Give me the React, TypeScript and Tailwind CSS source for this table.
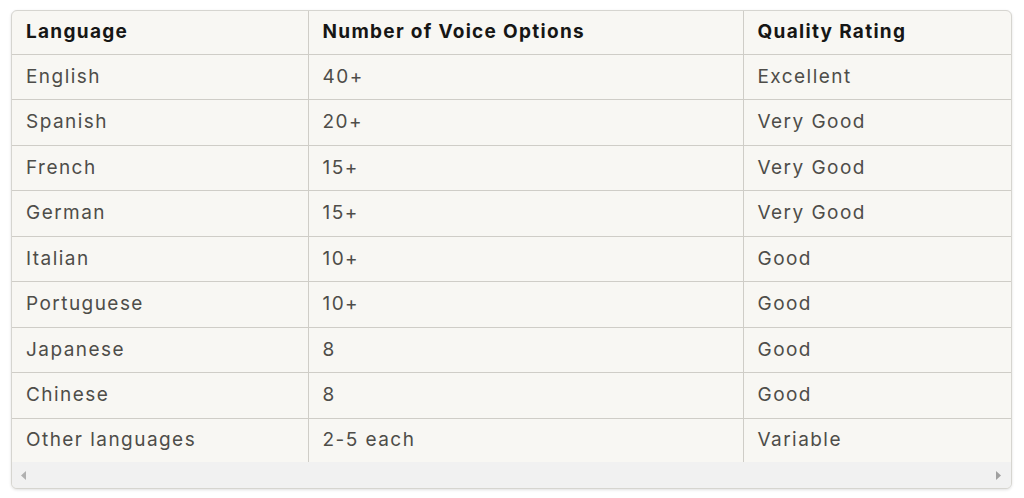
import React from "react";

const rows: [string, string, string][] = [
  ["English", "40+", "Excellent"],
  ["Spanish", "20+", "Very Good"],
  ["French", "15+", "Very Good"],
  ["German", "15+", "Very Good"],
  ["Italian", "10+", "Good"],
  ["Portuguese", "10+", "Good"],
  ["Japanese", "8", "Good"],
  ["Chinese", "8", "Good"],
  ["Other languages", "2-5 each", "Variable"],
];

export default function App() {
  return (
    <div
      className="w-[1024px] h-[498px] bg-white pt-[10px] pl-[11px]"
      style={{ fontFamily: "Inter, 'Noto Sans', sans-serif" }}
    >
      <div className="w-[1001px] rounded-[6px] border border-[#d6d5d0] bg-[#f8f7f3] overflow-hidden shadow-[0_1px_3px_rgba(0,0,0,0.12)]">
        <table className="w-full table-fixed border-collapse text-[19px]">
          <colgroup>
            <col className="w-[296px]" />
            <col className="w-[435px]" />
            <col />
          </colgroup>
          <thead>
            <tr className="h-[43px] border-b border-[#cfcdc7] tracking-[1.3px]">
              <th className="text-left font-bold text-[#161615] pl-[14px] pr-0 border-r border-[#cfcdc7] whitespace-nowrap">Language</th>
              <th className="text-left font-bold text-[#161615] pl-[14px] pr-0 border-r border-[#cfcdc7] whitespace-nowrap">Number of Voice Options</th>
              <th className="text-left font-bold text-[#161615] pl-[14px] pr-0 whitespace-nowrap">Quality Rating</th>
            </tr>
          </thead>
          <tbody>
            {rows.map((r, i) => (
              <tr
                key={r[0]}
                className={
                  (i < rows.length - 1
                    ? "h-[45.5px] border-b border-[#cfcdc7]"
                    : "h-[44px]") + " tracking-[1.45px]"
                }
              >
                <td className="pl-[14px] pr-0 text-[#4e4d49] border-r border-[#cfcdc7] whitespace-nowrap">{r[0]}</td>
                <td className="pl-[14px] pr-0 text-[#4e4d49] border-r border-[#cfcdc7] whitespace-nowrap">{r[1]}</td>
                <td className="pl-[14px] pr-0 text-[#4e4d49] whitespace-nowrap">{r[2]}</td>
              </tr>
            ))}
          </tbody>
        </table>
        <div className="h-[26px] bg-[#f1f1f1] flex items-center justify-between px-[9px]">
          <svg width="6" height="9" viewBox="0 0 6 9">
            <polygon points="5,0 5,9 0,4.5" fill="#b0b0b0" />
          </svg>
          <svg width="6" height="9" viewBox="0 0 6 9">
            <polygon points="0,0 0,9 5,4.5" fill="#a0a0a0" />
          </svg>
        </div>
      </div>
    </div>
  );
}
